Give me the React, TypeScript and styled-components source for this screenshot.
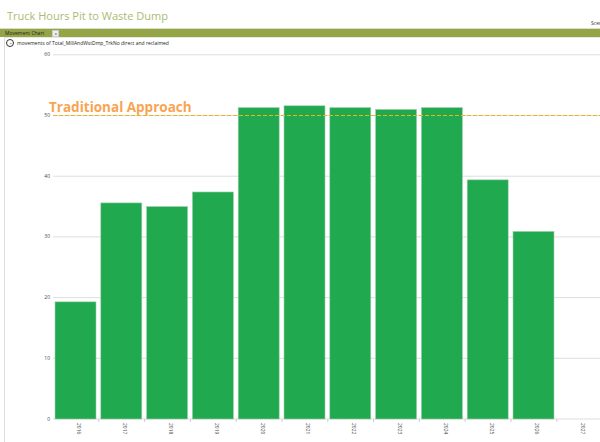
import React from "react";
import styled, { createGlobalStyle } from "styled-components";

const G = createGlobalStyle`
  html,body{margin:0;padding:0;background:#fff;overflow:hidden;}
  body{font-family:"Open Sans","Liberation Sans",sans-serif;}
`;
const Page = styled.div`width:600px;height:442px;position:relative;overflow:hidden;`;
const TitleRow = styled.div`height:28px;display:flex;align-items:flex-end;justify-content:space-between;padding:0 0 0 7px;`;
const Title = styled.div`font-size:11px;color:#a9bb72;line-height:14px;padding-bottom:5px;`;
const Sc = styled.div`font-size:5px;color:#333;padding-bottom:2px;width:9px;white-space:nowrap;overflow:hidden;`;
const Bar = styled.div`height:8px;background:#94a545;display:flex;align-items:center;gap:8px;padding-left:5px;border-top:1px solid #d8dcc8;`;
const BarText = styled.span`font-size:5px;color:#222;`;
const Badge = styled.span`width:5px;height:5px;border:1px solid #ccc;background:#eee;font-size:4px;line-height:5px;text-align:center;color:#333;`;
const Body = styled.div`border-left:1px solid #ddd;margin-left:4px;border-top:1px solid #e8e8e8;`;
const Sub = styled.div`display:flex;align-items:center;gap:3px;height:10px;font-size:5px;color:#222;padding-left:1px;`;
const Circle = styled.span`width:6px;height:6px;border:1px solid #333;border-radius:50%;font-size:4px;line-height:6px;text-align:center;`;

const vals = [19.3, 35.6, 35.0, 37.4, 51.3, 51.6, 51.3, 51.0, 51.3, 39.4, 30.9, 0];
const Y0 = 418 - 47, S = 6.07, X0 = 48, P = 45.8;

export default function App() {
  return (
    <Page>
      <G />
      <TitleRow><Title>Truck Hours Pit to Waste Dump</Title><Sc>Scenario</Sc></TitleRow>
      <Bar><BarText>Movement Chart</BarText><Badge>x</Badge></Bar>
      <Body>
        <Sub><Circle>⌄</Circle>movements of Total_MillAndWstDmp_TrkNo direct and reclaimed</Sub>
        <svg width="596" height="395" style={{ display: "block" }}>
          {[0, 10, 20, 30, 40, 50, 60].map(v => (
            <g key={v}>
              <line x1={X0} x2={596} y1={Y0 - v * S} y2={Y0 - v * S} stroke="#ddd" strokeWidth="1" />
              <text x={X0 - 3} y={Y0 - v * S + 1.5} fontSize="5" textAnchor="end" fill="#444">{v}</text>
            </g>
          ))}
          {vals.map((v, i) => {
            const x = X0 + i * P;
            return (
              <g key={i}>
                {v > 0 && <rect x={x + 2} y={Y0 - v * S} width={41} height={v * S} fill="#21a94f" stroke="#9fcfae" strokeWidth="0.6" />}
                <line x1={x + P} x2={x + P} y1={Y0} y2={Y0 + 3} stroke="#ccc" />
                <text transform={`translate(${x + P / 2 + 1.5},${Y0 + 4}) rotate(90)`} fontSize="5" fill="#444">{2016 + i}</text>
              </g>
            );
          })}
          <line x1={X0} x2={596} y1={Y0 - 50 * S} y2={Y0 - 50 * S} stroke="#f2b21b" strokeWidth="1" strokeDasharray="4 2" />
          <text x={X0 - 4} y={Y0 - 50 * S - 4} fontSize="13.5" fontWeight="bold" fill="#f8a453" fontFamily="Open Sans, sans-serif">Traditional Approach</text>
        </svg>
      </Body>
    </Page>
  );
}
